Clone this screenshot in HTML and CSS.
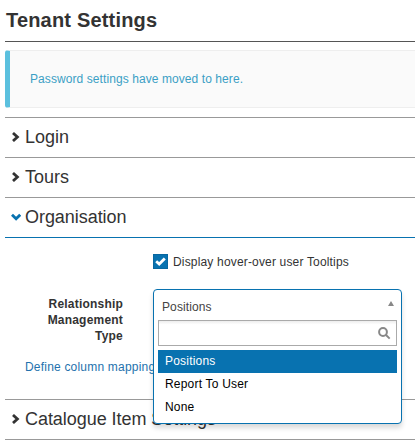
FILE: index.html
```html
<!DOCTYPE html>
<html lang="en">
<head>
<meta charset="utf-8">
<title>Tenant Settings</title>
<link rel="stylesheet" href="styles.css">
</head>
<body>
<main class="page">
  <h1 class="title">Tenant Settings</h1>
  <div class="alert">Password settings have moved to here.</div>
  <section class="section">
    <h2 class="heading"><svg class="chevron" viewBox="0 0 10 10"><path d="M2 1 6.4 5 2 9"/></svg><span>Login</span></h2>
  </section>
  <section class="section">
    <h2 class="heading"><svg class="chevron" viewBox="0 0 10 10"><path d="M2 1 6.4 5 2 9"/></svg><span>Tours</span></h2>
  </section>
  <section class="section">
    <h2 class="heading open"><svg class="chevron" viewBox="0 0 10 10"><path d="M1 2.8 5.1 6.8 9.2 2.8"/></svg><span class="name-open">Organisation</span></h2>
    <div class="panel">
      <div class="check-row">
        <span class="checkbox"><svg viewBox="0 0 13 13"><path d="M2.2 6.3 5.2 9 10.8 3.4"/></svg></span>
        <span class="check-text">Display hover-over user Tooltips</span>
      </div>
      <div class="field">
        <div class="label">Relationship<br>Management<br>Type</div>
        <div class="select">
          <div class="dropdown">
            <div class="current"><span>Positions</span><span class="arrow"></span></div>
            <div class="search"><svg viewBox="0 0 13 13"><circle cx="5" cy="5" r="3.9"/><path d="M8 8 11.7 11.6"/></svg></div>
            <ul class="options">
              <li class="selected">Positions</li>
              <li>Report To User</li>
              <li>None</li>
            </ul>
          </div>
        </div>
      </div>
      <a class="link">Define column mapping</a>
    </div>
  </section>
  <section class="section last">
    <h2 class="heading"><svg class="chevron" viewBox="0 0 10 10"><path d="M2 1 6.4 5 2 9"/></svg><span class="name-long">Catalogue Item Settings</span></h2>
  </section>
</main>
</body>
</html>
```
FILE: styles.css
```css
* { box-sizing: border-box; }
body {
  margin: 0;
  background: #fff;
  color: #333;
  font: 12px/16px "Liberation Sans", Arial, sans-serif;
  overflow: hidden;
}
.page { padding-left: 5px; }
.title {
  margin: 0;
  height: 42px;
  padding: 8px 0 0 1px;
  border-bottom: 1px solid #555;
  font-size: 20px;
  line-height: 24px;
  letter-spacing: .18px;
}
.alert {
  height: 58px;
  margin: 8px -5px 9px 0;
  padding: 20px 0 0 20px;
  border: 1px solid #eee;
  border-left: 5px solid #5bc0de;
  border-radius: 3px;
  background: #fafafa;
  color: #3a9fc5;
  letter-spacing: .08px;
}
.section { border-top: 1px solid #999; }
.last { border-bottom: 1px solid #999; }
.heading {
  display: flex;
  align-items: center;
  gap: 4px;
  height: 39px;
  margin: 0;
  padding: 0 0 2px 6px;
  font-size: 18px;
  font-weight: 400;
  line-height: 24px;
}
.name-open { letter-spacing: -.05px; }
.name-long { letter-spacing: -.05px; }
.chevron {
  width: 10px;
  height: 10px;
  fill: none;
  stroke: #333;
  stroke-width: 2.8;
}
.open .chevron { stroke: #0872b0; }
.panel {
  height: 162px;
  padding-top: 16px;
  border-top: 1px solid #0872b0;
  letter-spacing: .2px;
}
.check-row {
  display: flex;
  gap: 5px;
  padding-left: 148px;
}
.check-text { letter-spacing: .17px; }
.checkbox {
  width: 15px;
  height: 15px;
  background: #0872b0;
  border: 1px solid #0867a0;
}
.checkbox svg {
  display: block;
  width: 13px;
  height: 13px;
  fill: none;
  stroke: #fff;
  stroke-width: 2.8;
}
.field {
  display: flex;
  gap: 30px;
  height: 88px;
  padding-top: 19px;
}
.label {
  width: 118px;
  padding-top: 7px;
  text-align: right;
  font-weight: 700;
}
.select { position: relative; width: 249px; }
.dropdown {
  position: absolute;
  top: 0;
  left: 0;
  width: 249px;
  height: 135px;
  padding: 0 4px 4px;
  border: 1px solid #0872b0;
  border-radius: 4px;
  background: #fff;
  box-shadow: 0 4px 5px rgba(0, 0, 0, .15);
}
.current {
  display: flex;
  justify-content: space-between;
  height: 30px;
  padding: 9px 3px 0 4px;
  color: #444;
  letter-spacing: .1px;
}
.arrow {
  width: 6px;
  height: 5px;
  margin-top: 2px;
  background: #888;
  clip-path: polygon(50% 0, 100% 100%, 0 100%);
}
.search {
  display: flex;
  justify-content: flex-end;
  height: 26px;
  padding: 6px 5px 0 0;
  border: 1px solid #aaa;
  background: linear-gradient(#eee 1%, #fff 15%);
}
.search svg {
  width: 13px;
  height: 13px;
  fill: none;
  stroke: #888;
  stroke-width: 2;
}
.options {
  margin: 4px 0 0;
  padding: 0;
  list-style: none;
  color: #000;
}
.options li { height: 23px; padding: 3px 7px; }
.options .selected { background: #0872b0; color: #fff; }
.link {
  display: block;
  padding: 1px 0 0 20px;
  color: #2472ad;
}
```
